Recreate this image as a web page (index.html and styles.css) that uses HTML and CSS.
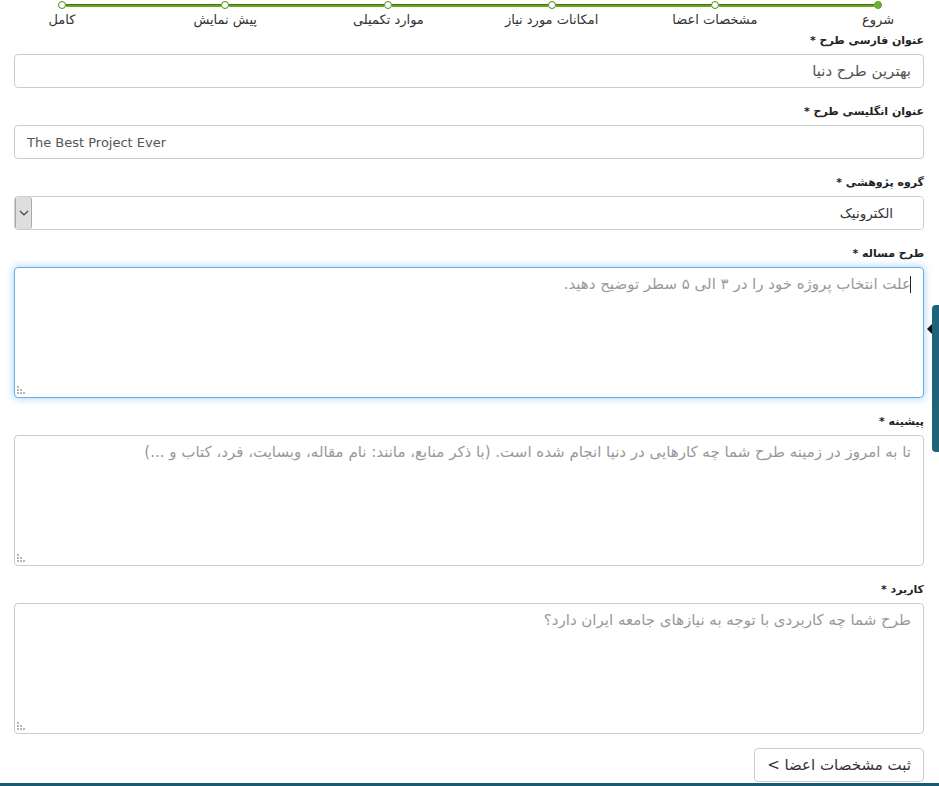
FILE: index.html
```html
<!DOCTYPE html>
<html lang="fa" dir="rtl">

<head>
    <meta charset="UTF-8">
    <meta name="viewport" content="width=device-width, initial-scale=1.0">
    <title>ثبت طرح</title>
    <link rel="stylesheet" href="styles.css">
</head>

<body>
    <!-- Wizard steps -->
    <div class="steps">
        <div class="step is-done">
            <span class="step-dot"></span>
            <span class="step-label">شروع</span>
        </div>
        <div class="step-line"></div>
        <div class="step">
            <span class="step-dot"></span>
            <span class="step-label">مشخصات اعضا</span>
        </div>
        <div class="step-line"></div>
        <div class="step">
            <span class="step-dot"></span>
            <span class="step-label">امکانات مورد نیاز</span>
        </div>
        <div class="step-line"></div>
        <div class="step">
            <span class="step-dot"></span>
            <span class="step-label">موارد تکمیلی</span>
        </div>
        <div class="step-line"></div>
        <div class="step">
            <span class="step-dot"></span>
            <span class="step-label">پیش نمایش</span>
        </div>
        <div class="step-line"></div>
        <div class="step">
            <span class="step-dot"></span>
            <span class="step-label">کامل</span>
        </div>
    </div>

    <form class="project-form">
        <div class="form-group">
            <label class="form-label">عنوان فارسی طرح *</label>
            <input type="text" class="form-control" value="بهترین طرح دنیا">
        </div>

        <div class="form-group">
            <label class="form-label">عنوان انگلیسی طرح *</label>
            <input type="text" class="form-control is-ltr" value="The Best Project Ever">
        </div>

        <div class="form-group">
            <label class="form-label">گروه پژوهشی *</label>
            <div class="select-box">
                <select class="select-control">
                    <option>الکترونیک</option>
                    <option>کامپیوتر</option>
                    <option>مکانیک</option>
                </select>
                <span class="select-arrow">
                    <svg width="10" height="6" viewBox="0 0 10 6">
                        <path d="M1 1 L5 5 L9 1" fill="none" stroke="#444" stroke-width="1.2" />
                    </svg>
                </span>
            </div>
        </div>

        <div class="form-group">
            <label class="form-label">طرح مساله *</label>
            <div class="area-box">
                <textarea class="form-control form-area is-focused" placeholder="علت انتخاب پروژه خود را در ۳ الی ۵ سطر توضیح دهید."></textarea>
                <span class="caret"></span>
                <svg class="grip" width="9" height="9" viewBox="0 0 9 9">
                    <rect x="0" y="0" width="2" height="2" />
                    <rect x="0" y="3" width="2" height="2" />
                    <rect x="3" y="3" width="2" height="2" />
                    <rect x="0" y="6" width="2" height="2" />
                    <rect x="3" y="6" width="2" height="2" />
                    <rect x="6" y="6" width="2" height="2" />
                </svg>
            </div>
        </div>

        <div class="form-group">
            <label class="form-label">پیشینه *</label>
            <div class="area-box">
                <textarea class="form-control form-area" placeholder="تا به امروز در زمینه طرح شما چه کارهایی در دنیا انجام شده است. (با ذکر منابع، مانند: نام مقاله، وبسایت، فرد، کتاب و ...)"></textarea>
                <svg class="grip" width="9" height="9" viewBox="0 0 9 9">
                    <rect x="0" y="0" width="2" height="2" />
                    <rect x="0" y="3" width="2" height="2" />
                    <rect x="3" y="3" width="2" height="2" />
                    <rect x="0" y="6" width="2" height="2" />
                    <rect x="3" y="6" width="2" height="2" />
                    <rect x="6" y="6" width="2" height="2" />
                </svg>
            </div>
        </div>

        <div class="form-group">
            <label class="form-label">کاربرد *</label>
            <div class="area-box">
                <textarea class="form-control form-area" placeholder="طرح شما چه کاربردی با توجه به نیازهای جامعه ایران دارد؟"></textarea>
                <svg class="grip" width="9" height="9" viewBox="0 0 9 9">
                    <rect x="0" y="0" width="2" height="2" />
                    <rect x="0" y="3" width="2" height="2" />
                    <rect x="3" y="3" width="2" height="2" />
                    <rect x="0" y="6" width="2" height="2" />
                    <rect x="3" y="6" width="2" height="2" />
                    <rect x="6" y="6" width="2" height="2" />
                </svg>
            </div>
        </div>

        <div class="form-actions">
            <button type="button" class="btn">ثبت مشخصات اعضا &gt;</button>
        </div>
    </form>

    <!-- Side drawer handle -->
    <div class="side-tab"></div>

    <div class="footer-bar"></div>
</body>

</html>
```

FILE: styles.css
```css
* {
    margin: 0;
    padding: 0;
    box-sizing: border-box;
}

body {
    font-family: "DejaVu Sans", sans-serif;
    font-size: 13px;
    color: #333;
    background-color: #fff;
    overflow: hidden;
}

/* Wizard steps */
.steps {
    display: flex;
    margin: 0 57px 0 58px;
    padding-top: 1px;
}

.step {
    width: 8px;
    display: flex;
    flex-direction: column;
    align-items: center;
}

.step-dot {
    width: 8px;
    height: 8px;
    border: 1.5px solid #4f8a10;
    border-radius: 50%;
    background-color: #fff;
}

.step.is-done .step-dot {
    background-color: #6cb52a;
    border-color: #5c9c1c;
}

.step-label {
    white-space: nowrap;
    margin-top: 3px;
    font-size: 13px;
    line-height: 16px;
    color: #333;
}

.step-line {
    flex: 1;
    height: 3px;
    margin-top: 3px;
    background-color: #6aa41e;
    border-top: 1px solid #3f7406;
}

/* Form */
.project-form {
    padding: 4px 15px 0 14px;
}

.form-group {
    margin-bottom: 15px;
}

.form-label {
    display: block;
    font-size: 11px;
    font-weight: bold;
    line-height: 17px;
    margin-bottom: 5px;
    color: #222;
}

.form-control {
    display: block;
    width: 100%;
    height: 34px;
    padding: 6px 12px;
    font-family: inherit;
    font-size: 15px;
    color: #555;
    background-color: #fff;
    border: 1px solid #ccc;
    border-radius: 4px;
    outline: none;
}

.form-control.is-ltr {
    direction: ltr;
    font-size: 13px;
}

.form-control::placeholder {
    color: #999;
}

/* Select with arrow box on the left */
.select-box {
    display: flex;
    height: 34px;
    border: 1px solid #ccc;
    border-radius: 4px;
    overflow: hidden;
}

.select-control {
    flex: 1;
    -webkit-appearance: none;
    appearance: none;
    border: none;
    outline: none;
    background: #fff;
    font-family: inherit;
    font-size: 13.5px;
    color: #333;
    padding: 0 30px 0 12px;
}

.select-arrow {
    width: 17px;
    display: flex;
    align-items: center;
    justify-content: center;
    background-color: #dedede;
    border-left: 1px solid #ababab;
    border-right: 1px solid #ababab;
    border-radius: 0 3px 3px 0;
}

/* Textareas */
.area-box {
    position: relative;
}

.form-area {
    height: 131px;
    line-height: 20px;
    resize: none;
}

.form-area.is-focused {
    border-color: #66afe9;
    box-shadow: 0 0 8px rgba(102, 175, 233, 0.6);
}

.caret {
    position: absolute;
    top: 9px;
    right: 13px;
    width: 1px;
    height: 17px;
    background-color: #222;
}

.grip {
    position: absolute;
    left: 3px;
    bottom: 3px;
    fill: #b8b8b8;
}

/* Actions */
.form-actions {
    margin-top: -1px;
}

.btn {
    height: 34px;
    padding: 6px 12px;
    font-family: inherit;
    font-size: 15px;
    color: #333;
    background-color: #fff;
    border: 1px solid #ccc;
    border-radius: 4px;
    cursor: pointer;
}

/* Drawer handle on the right edge */
.side-tab {
    position: fixed;
    top: 305px;
    right: 0;
    width: 7px;
    height: 147px;
    background-color: #1d6478;
    border-radius: 4px 0 0 4px;
}

.side-tab::before {
    content: "";
    position: absolute;
    left: -5px;
    top: 19px;
    border-top: 5px solid transparent;
    border-bottom: 5px solid transparent;
    border-right: 5px solid #111;
}

.footer-bar {
    margin-top: 1px;
    height: 6px;
    background-color: #175a72;
}
```
